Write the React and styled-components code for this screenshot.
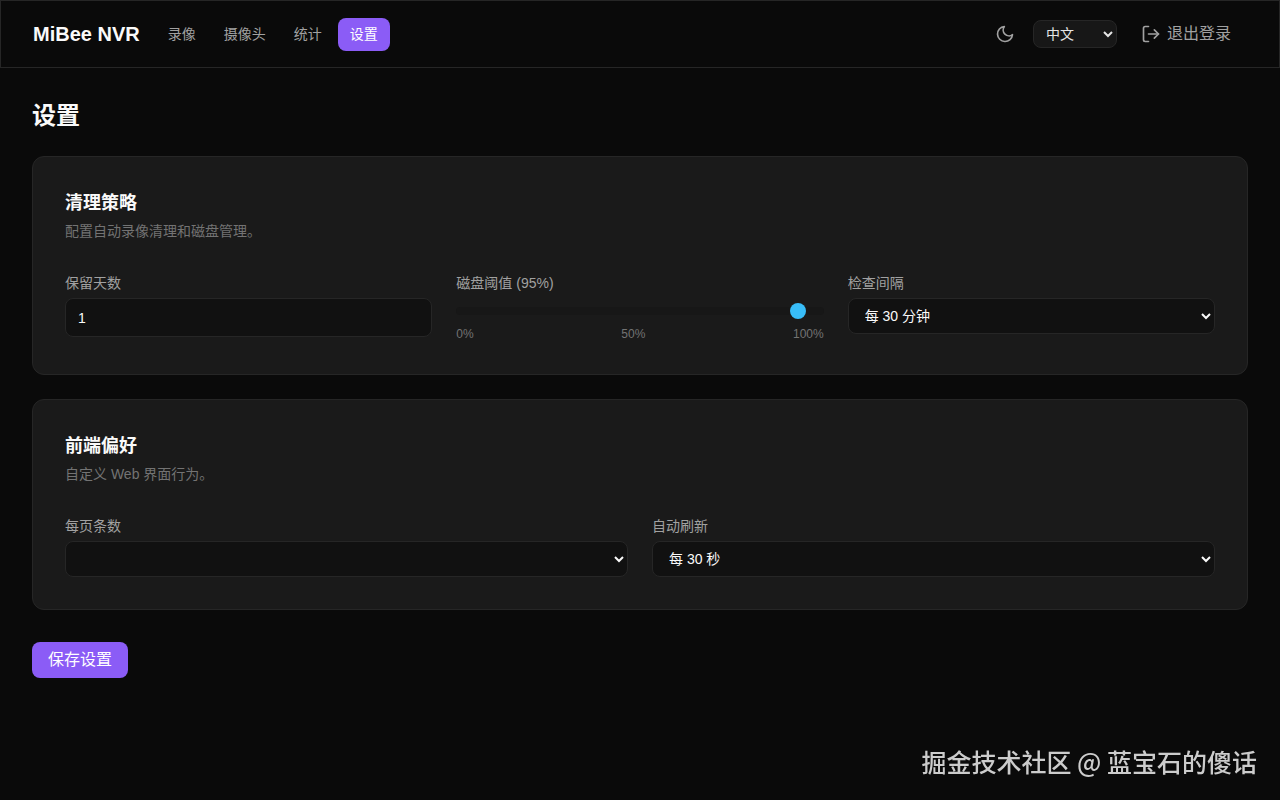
import React, { useState } from 'react';
import styled, { createGlobalStyle } from 'styled-components';
import { LogOut } from 'lucide-react';

const links = [
  { href: '#recordings', text: '录像' },
  { href: '#cameras', text: '摄像头' },
  { href: '#stats', text: '统计' },
  { href: '#settings', text: '设置' },
];

export default function App() {
  const [language, setLanguage] = useState('zh');
  const [days, setDays] = useState('1');
  const [threshold, setThreshold] = useState(95);
  const [checkInterval, setCheckInterval] = useState('30');
  const [pageSize, setPageSize] = useState('');
  const [refresh, setRefresh] = useState('30');

  return (
    <>
      <GlobalStyle />
      <Header>
        <Brand>MiBee NVR</Brand>
        <Nav>
          {links.map((link) => (
            <NavLink key={link.href} href={link.href} $active={link.href === '#settings'}>
              {link.text}
            </NavLink>
          ))}
        </Nav>
        <Actions>
          <ThemeButton type="button" aria-label="切换主题">
            <MoonIcon />
          </ThemeButton>
          <LanguageSelect aria-label="语言" value={language} onChange={(e) => setLanguage(e.target.value)}>
            <option value="zh">中文</option>
            <option value="en">English</option>
          </LanguageSelect>
          <LogoutButton type="button">
            <LogOut size={20} />
            退出登录
          </LogoutButton>
        </Actions>
      </Header>

      <Main>
        <Title>设置</Title>

        <Card>
          <CardTitle>清理策略</CardTitle>
          <CardText>配置自动录像清理和磁盘管理。</CardText>
          <Fields $columns={3}>
            <Field>
              <Label htmlFor="days">保留天数</Label>
              <Input id="days" type="number" value={days} onChange={(e) => setDays(e.target.value)} />
            </Field>
            <Field>
              <Label htmlFor="threshold">磁盘阈值 ({threshold}%)</Label>
              <Range
                id="threshold"
                type="range"
                min="0"
                max="100"
                value={threshold}
                onChange={(e) => setThreshold(e.target.value)}
              />
              <Scale>
                <span>0%</span>
                <span>50%</span>
                <span>100%</span>
              </Scale>
            </Field>
            <Field>
              <Label htmlFor="interval">检查间隔</Label>
              <Select id="interval" value={checkInterval} onChange={(e) => setCheckInterval(e.target.value)}>
                <option value="30">每 30 分钟</option>
                <option value="60">每 60 分钟</option>
              </Select>
            </Field>
          </Fields>
        </Card>

        <Card>
          <CardTitle>前端偏好</CardTitle>
          <CardText>自定义 Web 界面行为。</CardText>
          <Fields $columns={2}>
            <Field>
              <Label htmlFor="pageSize">每页条数</Label>
              <Select id="pageSize" value={pageSize} onChange={(e) => setPageSize(e.target.value)}>
                <option value=""></option>
                <option value="20">20</option>
                <option value="50">50</option>
              </Select>
            </Field>
            <Field>
              <Label htmlFor="refresh">自动刷新</Label>
              <Select id="refresh" value={refresh} onChange={(e) => setRefresh(e.target.value)}>
                <option value="30">每 30 秒</option>
                <option value="60">每 60 秒</option>
              </Select>
            </Field>
          </Fields>
        </Card>

        <SaveButton type="button">保存设置</SaveButton>
      </Main>

      <Watermark>掘金技术社区 @ 蓝宝石的傻话</Watermark>
    </>
  );
}

function MoonIcon() {
  return (
    <svg
      width="20"
      height="20"
      viewBox="0 0 24 24"
      fill="none"
      stroke="currentColor"
      strokeWidth="2"
      strokeLinecap="round"
      strokeLinejoin="round"
    >
      <path d="M21 12.79A9 9 0 1 1 11.21 3 7 7 0 0 0 21 12.79z" />
    </svg>
  );
}

const GlobalStyle = createGlobalStyle`
  * {
    box-sizing: border-box;
  }
  body {
    margin: 0;
    background-color: #0a0a0a;
    color: #fafafa;
    font-family: "Liberation Sans", "Noto Sans CJK SC", sans-serif;
    font-size: 16px;
    line-height: 24px;
  }
  button, input, select {
    font-family: inherit;
  }
`;

const Header = styled.header`
  display: flex;
  align-items: center;
  gap: 16px;
  height: 68px;
  padding: 0 32px;
  border: 1px solid #262626;
`;

const Brand = styled.div`
  font-size: 20px;
  font-weight: 700;
  line-height: 30px;
`;

const Nav = styled.nav`
  display: flex;
  gap: 4px;
`;

const NavLink = styled.a`
  padding: 6px 12px;
  border-radius: 8px;
  background-color: ${(props) => (props.$active ? '#8b5cf6' : 'transparent')};
  color: ${(props) => (props.$active ? '#ffffff' : '#a1a1a1')};
  font-size: 14px;
  line-height: 21px;
  text-decoration: none;
`;

const Actions = styled.div`
  display: flex;
  align-items: center;
  gap: 8px;
  margin-left: auto;
`;

const ThemeButton = styled.button`
  display: flex;
  padding: 10px;
  border: none;
  border-radius: 8px;
  background: none;
  color: #a1a1a1;
`;

const LanguageSelect = styled.select`
  width: 84px;
  height: 28px;
  padding: 0 8px;
  border: 1px solid #262626;
  border-radius: 8px;
  background-color: #171717;
  color: #e5e5e5;
  font-size: 14px;
`;

const LogoutButton = styled.button`
  display: flex;
  align-items: center;
  gap: 6px;
  padding: 6px 16px;
  border: none;
  border-radius: 8px;
  background: none;
  color: #a1a1a1;
  font-size: 16px;
  line-height: 24px;
`;

const Main = styled.main`
  display: flex;
  flex-direction: column;
  gap: 24px;
  padding: 32px;
`;

const Title = styled.h1`
  margin: 0;
  font-size: 24px;
  font-weight: 700;
  line-height: 32px;
`;

const Card = styled.section`
  padding: 32px;
  border: 1px solid #262626;
  border-radius: 12px;
  background-color: #1a1a1a;
`;

const CardTitle = styled.h2`
  margin: 0 0 4px;
  font-size: 18px;
  font-weight: 700;
  line-height: 28px;
`;

const CardText = styled.p`
  margin: 0 0 32px;
  color: #737373;
  font-size: 14px;
  line-height: 20px;
`;

const Fields = styled.div`
  display: grid;
  grid-template-columns: repeat(${(props) => props.$columns}, 1fr);
  align-items: start;
  gap: 24px;
`;

const Field = styled.div`
  display: flex;
  flex-direction: column;
`;

const Label = styled.label`
  margin-bottom: 4px;
  color: #a1a1a1;
  font-size: 14px;
  line-height: 21px;
`;

const Input = styled.input`
  width: 100%;
  height: 39px;
  padding: 8px 12px;
  border: 1px solid #262626;
  border-radius: 8px;
  background-color: #111111;
  color: #fafafa;
  font-size: 14px;
  appearance: textfield;
`;

const Select = styled.select`
  width: 100%;
  height: 36px;
  padding: 0 12px;
  border: 1px solid #262626;
  border-radius: 8px;
  background-color: #111111;
  color: #fafafa;
  font-size: 14px;
`;

const Range = styled.input`
  width: 100%;
  height: 26px;
  margin: 0;
  background: none;
  appearance: none;

  &::-webkit-slider-runnable-track {
    height: 8px;
    border-radius: 4px;
    background-color: #171717;
  }
  &::-webkit-slider-thumb {
    width: 16px;
    height: 16px;
    margin-top: -4px;
    border-radius: 50%;
    background-color: #38bdf8;
    appearance: none;
  }
`;

const Scale = styled.div`
  display: flex;
  justify-content: space-between;
  margin-top: 2px;
  color: #737373;
  font-size: 12px;
  line-height: 16px;
`;

const SaveButton = styled.button`
  align-self: flex-start;
  margin-top: 8px;
  padding: 6px 16px;
  border: none;
  border-radius: 8px;
  background-color: #8b5cf6;
  color: #ffffff;
  font-size: 16px;
  line-height: 24px;
`;

const Watermark = styled.div`
  position: fixed;
  right: 23px;
  bottom: 21px;
  color: #cccccc;
  font-family: "Noto Sans CJK SC", sans-serif;
  font-size: 25px;
  font-weight: 500;
  line-height: 36px;
`;
